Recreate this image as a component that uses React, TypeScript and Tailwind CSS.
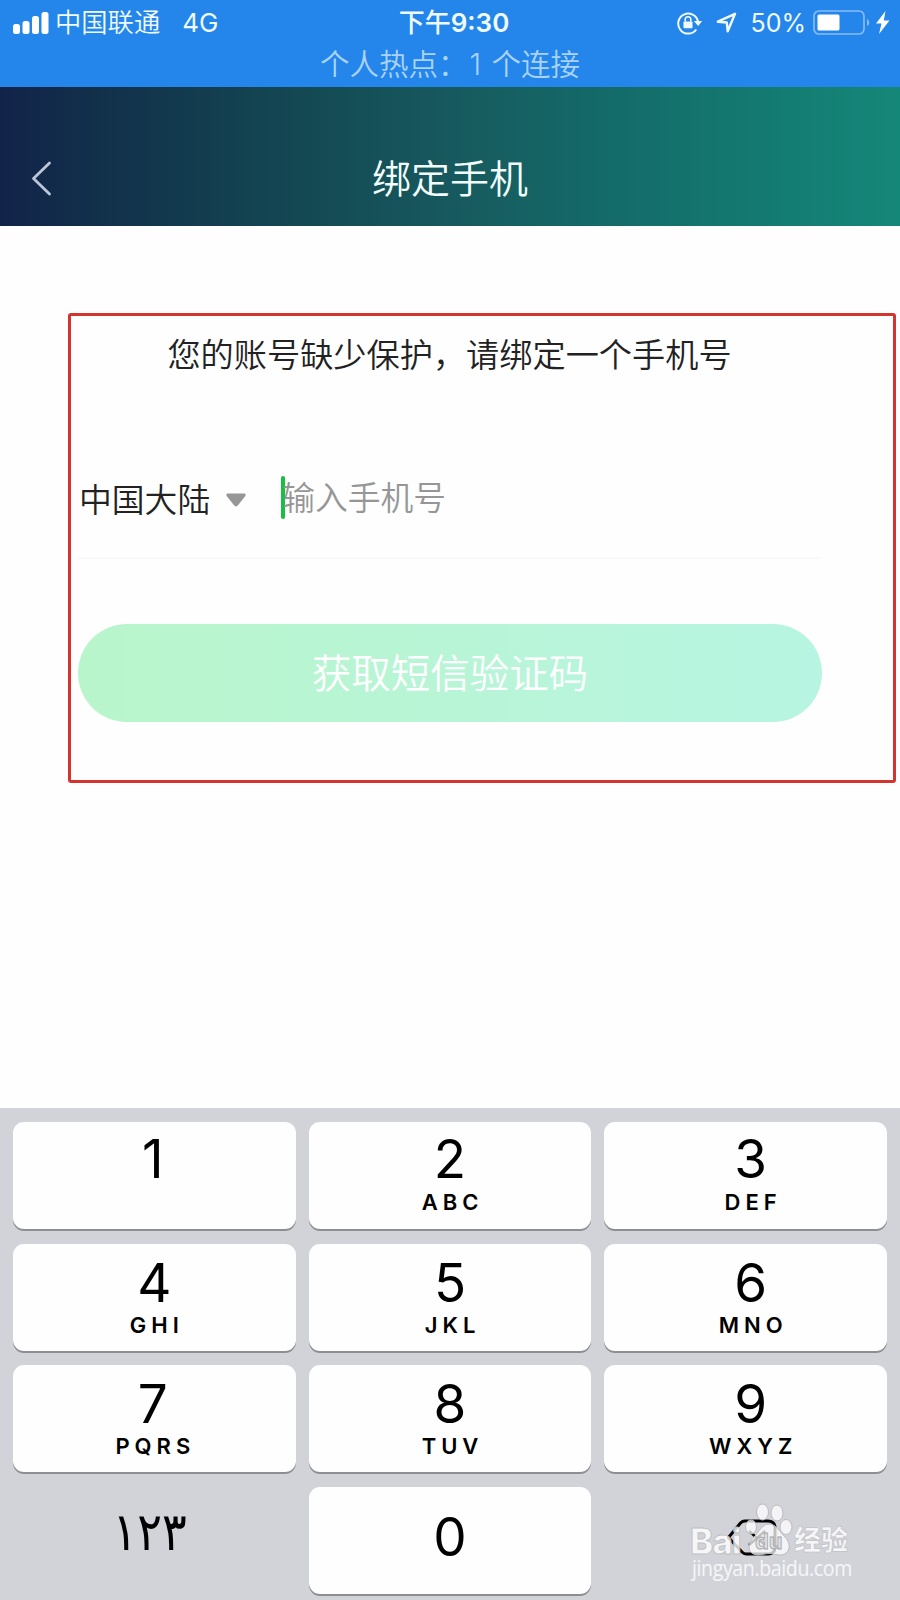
import { clsx } from 'clsx';

interface KeyDef {
  digit: string;
  letters?: string;
}

const ROWS: KeyDef[][] = [
  [{ digit: '1' }, { digit: '2', letters: 'ABC' }, { digit: '3', letters: 'DEF' }],
  [{ digit: '4', letters: 'GHI' }, { digit: '5', letters: 'JKL' }, { digit: '6', letters: 'MNO' }],
  [{ digit: '7', letters: 'PQRS' }, { digit: '8', letters: 'TUV' }, { digit: '9', letters: 'WXYZ' }],
];

function SignalIcon() {
  return (
    <svg width="36" height="22" viewBox="0 0 36 22" fill="white">
      <rect x="0" y="12" width="7" height="10" rx="2.5" />
      <rect x="9.5" y="9" width="7" height="13" rx="2.5" />
      <rect x="19" y="4" width="7" height="18" rx="2.5" />
      <rect x="28.5" y="0" width="7" height="22" rx="2.5" />
    </svg>
  );
}

function StatusBar() {
  return (
    <div className="h-[87px] bg-[#2485ea] text-[#effaff]">
      <div className="grid h-[45px] grid-cols-3 items-center">
        <div className="flex items-center pl-[13px] text-[26.3px] leading-[30px]">
          <SignalIcon />
          <span className="ml-[6px] [font-weight:350]">中国联通</span>
          <span className="ml-[22px] text-[26px]">4G</span>
        </div>
        <div className="flex justify-center pl-[8px] text-[26px] font-semibold leading-[30px]">
          <span className="font-medium">下午</span>9:30
        </div>
        <div className="flex items-center justify-end pr-[10px]">
          {/* Rotation lock */}
          <svg width="26" height="24" viewBox="0 0 26 24" fill="none" stroke="currentColor" strokeWidth="2">
            <path d="M19.3 18.5A10 10 0 1 1 21 10.5" />
            <path d="M16.8 10h8.4L21.2 15z" fill="currentColor" stroke="none" />
            <rect x="6.5" y="10.5" width="9" height="6.8" rx="0.8" fill="currentColor" stroke="none" />
            <path d="M8.2 10.5V8.5a2.8 2.8 0 0 1 5.6 0v2" strokeWidth="1.6" />
          </svg>
          {/* Location */}
          <svg className="ml-[13px]" width="21" height="21" viewBox="0 0 21 21" fill="none" stroke="currentColor" strokeWidth="2.4" strokeLinejoin="round">
            <path d="M19 1.8 1.8 9.7l9 .8.9 8.8z" />
          </svg>
          <span className="ml-[13px] text-[25px] leading-[30px]">50%</span>
          <svg className="ml-[7px]" width="57" height="25" viewBox="0 0 57 25">
            <rect x="1" y="1" width="50" height="23" rx="5" fill="none" stroke="#86bdf8" strokeWidth="1.7" />
            <rect x="4.5" y="4.5" width="22" height="16" rx="1.5" fill="white" />
            <path d="M54 9c3 1 3 6 0 7z" fill="#86bdf8" />
          </svg>
          <svg className="ml-[6px]" width="14" height="23" viewBox="0 0 14 23" fill="white">
            <path d="M9.5 0 0 12.5h5.5L3 23 13.5 9.5H7.8z" />
          </svg>
        </div>
      </div>
      <div className="flex justify-center pt-px text-[29.5px] leading-[36px] text-[#a9d3fa] [font-weight:350]">
        <span>个人热点：</span>
        <span className="w-[24px] pl-[2px]">1</span>
        <span>个连接</span>
      </div>
    </div>
  );
}

function NavBar() {
  return (
    <header className="grid h-[139px] grid-cols-3 items-center bg-[linear-gradient(90deg,#12234a_0%,#122f4a_10%,#144853_33%,#175b5f_52%,#146b69_68%,#147a71_85%,#158779_100%)] pt-[45px]">
      <svg className="mb-[2px] ml-[31px]" width="21" height="35" viewBox="0 0 21 35" fill="none" stroke="#bcc6d6" strokeWidth="2.8" strokeLinecap="round" strokeLinejoin="round">
        <path d="M18.5 2 2.5 17.5 18.5 33" />
      </svg>
      <h1 className="text-center text-[39px] leading-[46px] text-[#f2fffd] [font-weight:350]">绑定手机</h1>
    </header>
  );
}

function BindForm() {
  return (
    <section className="ml-[68px] h-[470px] w-[828px] rounded-[3px] border-[3px] border-[#d3352e]">
      <p className="pt-[17px] pr-[65px] text-center text-[33.2px] leading-[44px] text-[#222] [font-weight:350]">
        您的账号缺少保护，请绑定一个手机号
      </p>

      <div className="mt-[79px] ml-[7px] flex h-[103px] w-[744px] items-start border-b-2 border-[#f9f9f9] pt-[20px] text-[32.8px] leading-[44px] text-[#222] [font-weight:350]">
        <span className="mt-[2px] ml-[1px]">中国大陆</span>
        <svg className="mt-[17px] ml-[16px]" width="20" height="14" viewBox="0 0 20 14" fill="#969696">
          <path d="M2 .5h16c1.5 0 2.2 1.2 1.3 2.4L12 12.3q-2 2.2-4 0L.7 2.9C-.2 1.7.5.5 2 .5z" />
        </svg>
        <div className="ml-[35px] h-[43px] w-[4px] rounded-full bg-[#18bf40]" />
        <span className="-ml-[3px] text-[#969696]">输入手机号</span>
      </div>

      <button className="mt-[65px] ml-[7px] h-[98px] w-[744px] rounded-full bg-linear-to-r from-[#b9f5cb] to-[#b7f5e2] pt-[2px] text-[39.5px] leading-[50px] text-white [font-weight:350]">
        获取短信验证码
      </button>
    </section>
  );
}

function Key({ digit, letters }: KeyDef) {
  return (
    <button
      className={clsx(
        'flex h-[107px] flex-col items-center rounded-[11px] bg-[#fefefe] text-black shadow-[0_2px_0_#8c8e92]',
        digit === '0' && 'pt-[18px]',
        '123'.includes(digit) && 'pt-[5px]',
        '456789'.includes(digit) && 'pt-[7px]',
        '369'.includes(digit) && 'pl-[10px]',
        '17'.includes(digit) && 'pr-[3px]',
      )}
    >
      <span className="text-[53px] leading-[64px]">{digit}</span>
      {letters && (
        <span
          className={clsx(
            'pl-[5px] text-[22px] font-semibold leading-[26px] tracking-[5px]',
            '23'.includes(digit) ? '-mt-[2px]' : '-mt-[3px]',
          )}
        >
          {letters}
        </span>
      )}
    </button>
  );
}

function Watermark() {
  return (
    <div className="pointer-events-none absolute top-[1500px] left-[688px] h-[85px] w-[170px] text-white/80">
      <svg className="absolute top-0 left-[54px]" width="52" height="58" viewBox="0 0 52 58" fill="white" fillOpacity="0.75" stroke="#b9bbc0" strokeWidth="1">
        <ellipse cx="9" cy="27" rx="5.5" ry="7" />
        <ellipse cx="20.5" cy="12" rx="6" ry="8" />
        <ellipse cx="35" cy="13" rx="6" ry="8" />
        <ellipse cx="44" cy="27" rx="6" ry="7.5" />
        <path d="M27 24c-7 0-9 7-15 13-8 7-6 18 4 18 4 0 7-1.5 11-1.5S34 55 38 55c10 0 12-11 5-18-6-6-9-13-16-13z" />
      </svg>
      <span className="absolute top-[27px] left-[2px] font-['Inter'] text-[35px] font-extrabold leading-[28px] tracking-[-1px] [-webkit-text-stroke:1px_#bfc1c6]">Bai</span>
      <span className="absolute top-[29px] left-[67px] font-['Inter'] text-[22px] font-bold leading-[24px] text-[#d6d7da]/70 [-webkit-text-stroke:0.8px_#a0a2a6]">du</span>
      <span className="absolute top-[27px] left-[106px] text-[27px] font-black leading-[28px] [-webkit-text-stroke:0.7px_#bfc1c6]">经验</span>
      <span className="absolute top-[55px] left-[4px] origin-left scale-x-[0.93] font-['Open_Sans'] text-[21px] font-medium leading-[26px] tracking-[-0.4px]">jingyan.baidu.com</span>
    </div>
  );
}

function Keypad() {
  return (
    <div className="h-[492px] bg-[#d1d3d9] px-[13px] pt-[14px]">
      <div className="grid grid-cols-3 gap-x-[13px] gap-y-[14.7px]">
        {ROWS.flat().map((k) => (
          <Key key={k.digit} {...k} />
        ))}
        <div className="flex h-[107px] items-center justify-center pr-[10px] pb-[18px] font-['DejaVu_Sans'] text-[53px] leading-[50px] tracking-[-5px] text-black">
          <span className="scale-x-[0.87]">١٢٣</span>
        </div>
        <Key digit="0" />
        <div className="flex h-[107px] items-start justify-center pt-[32px] pl-[13px]">
          <svg width="50" height="37" viewBox="0 0 50 37" fill="none" stroke="black" strokeWidth="3" strokeLinejoin="round">
            <path d="M17.5 2H41q7 0 7 7v19q0 7-7 7H19q-2 0-4-2L1.5 18.5 13.5 4q2-2 4-2z" />
            <path d="m22 12 16 14M38 12 22 26" strokeWidth="2.5" />
          </svg>
        </div>
      </div>
    </div>
  );
}

export default function App() {
  return (
    <div className="relative flex h-[1600px] w-[900px] flex-col overflow-hidden bg-[#fefefe] font-['Inter','Noto_Sans_CJK_SC',sans-serif]">
      <StatusBar />
      <NavBar />
      <main className="flex-1 pt-[87px]">
        <BindForm />
      </main>
      <Keypad />
      <Watermark />
    </div>
  );
}
